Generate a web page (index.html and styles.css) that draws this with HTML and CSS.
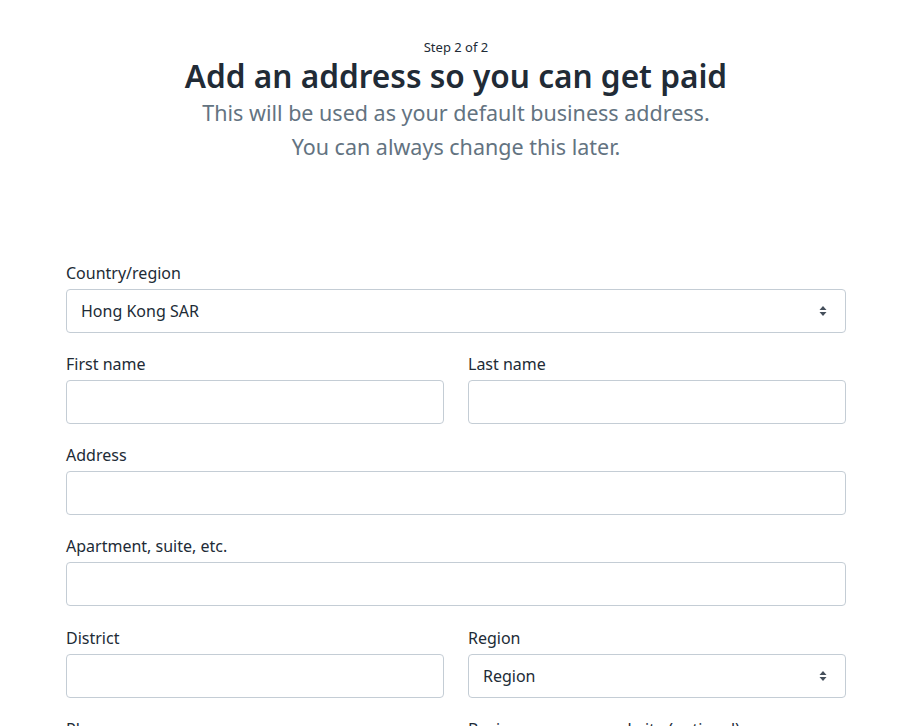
FILE: index.html
```html
<!DOCTYPE html>
<html lang="en">
<head>
<meta charset="utf-8">
<title>Add an address</title>
<link rel="stylesheet" href="styles.css">
</head>
<body>
<div class="page">
  <header class="intro">
    <p class="step">Step 2 of 2</p>
    <h1 class="title">Add an address so you can get paid</h1>
    <p class="subtitle">This will be used as your default business address.<br>You can always change this later.</p>
  </header>

  <form class="form">
    <div class="field">
      <label class="label">Country/region</label>
      <div class="select">
        <span class="select-value">Hong Kong SAR</span>
        <svg class="arrows" width="8" height="12" viewBox="0 0 8 12"><path d="M4 1 L7.5 5 H0.5 Z M4 11 L7.5 7 H0.5 Z" fill="#454f5b"/></svg>
      </div>
    </div>

    <div class="row">
      <div class="field">
        <label class="label">First name</label>
        <div class="input"></div>
      </div>
      <div class="field">
        <label class="label">Last name</label>
        <div class="input"></div>
      </div>
    </div>

    <div class="field">
      <label class="label">Address</label>
      <div class="input"></div>
    </div>

    <div class="field">
      <label class="label">Apartment, suite, etc.</label>
      <div class="input"></div>
    </div>

    <div class="row row-last">
      <div class="field">
        <label class="label">District</label>
        <div class="input"></div>
      </div>
      <div class="field">
        <label class="label">Region</label>
        <div class="select">
          <span class="select-value">Region</span>
          <svg class="arrows" width="8" height="12" viewBox="0 0 8 12"><path d="M4 1 L7.5 5 H0.5 Z M4 11 L7.5 7 H0.5 Z" fill="#454f5b"/></svg>
        </div>
      </div>
    </div>

    <div class="row">
      <div class="field">
        <label class="label">Phone</label>
        <div class="input"></div>
      </div>
      <div class="field">
        <label class="label">Business name or website (optional)</label>
        <div class="input"></div>
      </div>
    </div>
  </form>
</div>
</body>
</html>
```

FILE: styles.css
```css
html, body {
  margin: 0;
  padding: 0;
  background: #ffffff;
  overflow: hidden;
}

body {
  font-family: "Noto Sans", "Open Sans", sans-serif;
  color: #212b36;
  height: 726px;
}

.page {
  width: 780px;
  margin-left: 66px;
}

.intro {
  text-align: center;
  padding-top: 38px;
}

.step {
  margin: 0 0 1px;
  font-size: 13px;
  line-height: 18px;
  color: #212b36;
}

.title {
  margin: 0;
  font-size: 31.6px;
  line-height: 38px;
  font-weight: 600;
  color: #212b36;
}

.subtitle {
  margin: 1px 0 0;
  font-size: 21.5px;
  line-height: 34px;
  color: #637381;
}

.form {
  margin-top: 99px;
  display: flex;
  flex-direction: column;
  gap: 21px;
}

.row {
  display: flex;
  gap: 24px;
}

.row-last {
  margin-top: 1px;
}

.row .field {
  flex: 1;
}

.field {
  display: flex;
  flex-direction: column;
}

.label {
  font-size: 16px;
  line-height: 20px;
  margin-bottom: 6px;
  color: #212b36;
}

.input, .select {
  box-sizing: border-box;
  height: 44px;
  border: 1px solid #c4cdd5;
  border-radius: 4px;
  background: #fff;
}

.select {
  display: flex;
  align-items: center;
  justify-content: space-between;
  padding: 0 18px 0 14px;
}

.select-value {
  font-size: 16px;
  color: #212b36;
}

.arrows {
  display: block;
}
```
